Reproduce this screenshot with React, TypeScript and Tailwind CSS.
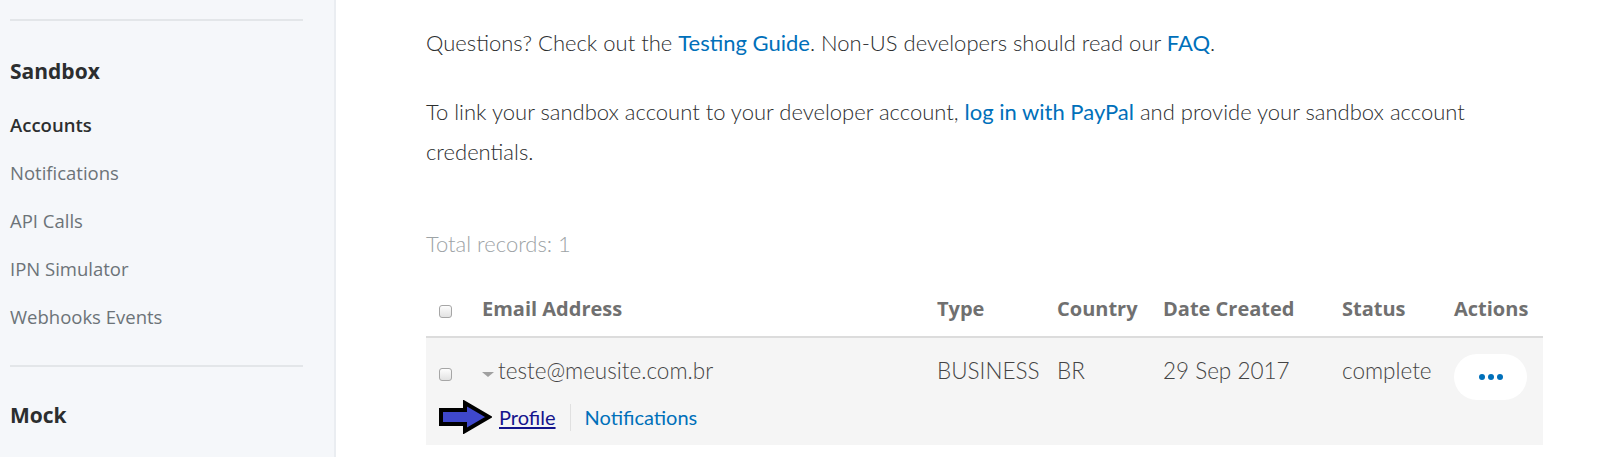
import React from 'react';

const SIDE_ITEMS = ['Notifications', 'API Calls', 'IPN Simulator', 'Webhooks Events'];

const COLS = 'grid grid-cols-[56px_455px_120px_106px_179px_112px_89px]';

function Checkbox() {
  return (
    <span className="inline-block h-[13px] w-[13px] rounded-[3px] border border-[#a6a6a6] bg-gradient-to-b from-[#fdfdfd] to-[#e2e2e2]" />
  );
}

function Arrow() {
  return (
    <svg width="54" height="34" viewBox="0 0 54 34" className="shrink-0">
      <path
        d="M3 10 L27 10 L27 3 L51 17 L27 31 L27 24 L3 24 Z"
        fill="#3f48cc"
        stroke="#000"
        strokeWidth="4"
        strokeLinejoin="miter"
      />
    </svg>
  );
}

export default function App() {
  return (
    <div className="flex h-[457px] w-[1600px] overflow-hidden bg-white font-['Lato',sans-serif]">
      {/* Sidebar */}
      <aside className="w-[336px] shrink-0 border-r-2 border-[#eaedf1] bg-[#f5f7fa] pl-[10px] pr-[31px] font-['Open_Sans',sans-serif]">
        <div className="mt-[19px] h-[2px] bg-[#e3e6e9]" />
        <h3 className="mt-[35px] text-[21px] leading-[30px] font-bold text-[#2c2e2f]">Sandbox</h3>
        <div className="mt-[27px] text-[18.5px] leading-[24px] font-semibold text-[#2c2e2f]">Accounts</div>
        <ul className="text-[18.5px] leading-[24px] text-[#6c7378]">
          {SIDE_ITEMS.map((item) => (
            <li key={item} className="mt-[24px]">
              {item}
            </li>
          ))}
        </ul>
        <div className="mt-[36px] h-[2px] bg-[#e3e6e9]" />
        <h3 className="mt-[33px] text-[21px] leading-[30px] font-bold text-[#2c2e2f]">Mock</h3>
      </aside>

      {/* Main */}
      <main className="w-[1208px] pl-[90px] text-[22px] font-light text-[#2c2e2f]">
        <p className="mt-[23px] leading-[40px]">
          Questions? Check out the <a className="font-normal text-[#0070ba]">Testing Guide</a>. Non-US developers
          should read our <a className="font-normal text-[#0070ba]">FAQ</a>.
        </p>
        <p className="mt-[29px] w-[1080px] leading-[40px]">
          To link your sandbox account to your developer account,{' '}
          <a className="font-normal text-[#0070ba]">log in with PayPal</a> and provide your sandbox account
          credentials.
        </p>
        <p className="mt-[52px] leading-[40px] text-[#9da3a6]">Total records: 1</p>

        <div className="mt-[18px] w-[1117px]">
          <div
            className={`${COLS} h-[56px] items-center border-b-2 border-[#dcdcdc] font-['Open_Sans',sans-serif] text-[20px] font-bold text-[#707070]`}
          >
            <div className="pl-[13px] pt-[4px]">
              <Checkbox />
            </div>
            <div>Email Address</div>
            <div>Type</div>
            <div>Country</div>
            <div>Date Created</div>
            <div>Status</div>
            <div>Actions</div>
          </div>

          <div className="h-[107px] bg-[#f5f5f5]">
            <div className={`${COLS} items-start pt-[16px] text-[22.5px] leading-[30px] text-[#444]`}>
              <div className="pl-[13px] pt-[8px] leading-none">
                <Checkbox />
              </div>
              <div className="flex items-center pt-[2px]">
                <span className="mr-[4px] mt-[6px] h-0 w-0 border-x-[6px] border-t-[5px] border-x-transparent border-t-[#a0a0a0]" />
                teste@meusite.com.br
              </div>
              <div className="pt-[2px]">BUSINESS</div>
              <div className="pt-[2px]">BR</div>
              <div className="pt-[2px]">29 Sep 2017</div>
              <div className="pt-[2px]">complete</div>
              <div>
                <button className="flex h-[46px] w-[73px] items-center justify-center gap-[3px] rounded-[23px] bg-white">
                  <span className="h-[6px] w-[6px] rounded-full bg-[#0070ba]" />
                  <span className="h-[6px] w-[6px] rounded-full bg-[#0070ba]" />
                  <span className="h-[6px] w-[6px] rounded-full bg-[#0070ba]" />
                </button>
              </div>
            </div>
            <div className="flex items-center pl-[12px] text-[20px] font-normal">
              <Arrow />
              <a className="ml-[7px] text-[#14148c] underline underline-offset-2">Profile</a>
              <span className="mx-[14px] h-[27px] w-px bg-[#e0e0e0]" />
              <a className="text-[#0070ba]">Notifications</a>
            </div>
          </div>
        </div>
      </main>
    </div>
  );
}
